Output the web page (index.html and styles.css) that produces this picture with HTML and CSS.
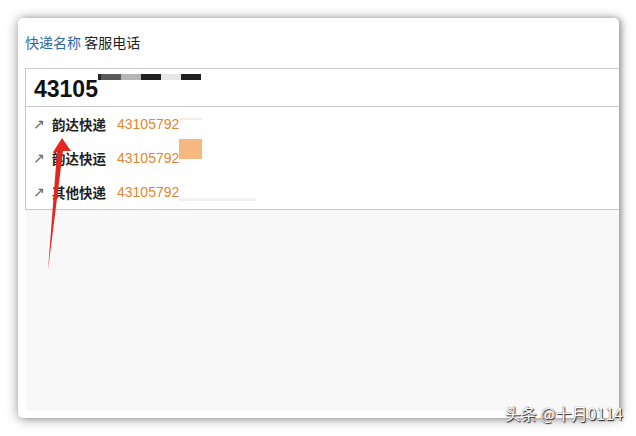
FILE: index.html
```html
<!DOCTYPE html>
<html lang="zh">
<head>
<meta charset="utf-8">
<link rel="stylesheet" href="styles.css">
</head>
<body>
<div class="page">
  <div class="card">
    <div class="tabs"><span class="tab active">快递名称</span> <span class="tab">客服电话</span></div>
    <div class="panel">
      <div class="search">
        <span class="query">43105</span>
        <span class="mask">
          <i class="m m0"></i><i class="m m1"></i><i class="m m2"></i><i class="m m3"></i><i class="m m4"></i><i class="m m5"></i>
        </span>
      </div>
      <ul class="list">
        <li class="row"><span class="ic">↗</span><span class="name">韵达快递</span><span class="num">43105792</span><span class="blur b1"></span></li>
        <li class="row"><span class="ic">↗</span><span class="name">韵达快运</span><span class="num">43105792</span><span class="blur b2"></span></li>
        <li class="row"><span class="ic">↗</span><span class="name">其他快递</span><span class="num">43105792</span><span class="blur b3"></span></li>
      </ul>
      <div class="rest"></div>
    </div>
  </div>
  <svg class="arrow" width="636" height="436" viewBox="0 0 636 436">
    <polygon points="48,270 57,152 52.5,153 62,138 71,151 63,151" fill="#e3261f"/>
  </svg>
  <div class="mark">头条 @十月0114</div>
</div>
</body>
</html>
```
FILE: styles.css
```css
html, body {
  margin: 0;
  padding: 0;
  background: #ffffff;
}
.page {
  position: relative;
  width: 636px;
  height: 436px;
  overflow: hidden;
  font-family: "Liberation Sans", "Noto Sans CJK SC", sans-serif;
}
.card {
  position: absolute;
  left: 18px;
  top: 18px;
  width: 601px;
  height: 400px;
  background: #fff;
  border-radius: 5px;
  box-shadow: 0 1px 12px rgba(0,0,0,0.42), 3px 0 5px rgba(0,0,0,0.18);
  overflow: hidden;
  display: flex;
  flex-direction: column;
  padding: 0 0 7px 7px;
  box-sizing: border-box;
}
.tabs {
  height: 50px;
  padding-top: 14px;
  box-sizing: border-box;
  font-size: 14px;
  line-height: 20px;
  font-family: "Noto Sans CJK SC", sans-serif;
  color: #222;
}
.tab.active { color: #2d68a6; }
.panel {
  flex: 1;
  display: flex;
  flex-direction: column;
  width: 720px;
}
.search {
  height: 39px;
  border: 1px solid #c9c9c9;
  box-sizing: border-box;
  display: flex;
  align-items: center;
  padding-left: 8px;
  background: #fff;
}
.query {
  font-size: 23px;
  font-weight: bold;
  color: #111;
  line-height: 24px;
  margin-top: 3px;
}
.mask {
  display: flex;
  align-self: flex-start;
  margin-top: 5px;
}
.m { display: block; height: 6px; width: 20px; }
.m0 { width: 3px; background: #222; }
.m1 { background: #5a5a5a; }
.m2 { background: #b5b5b5; }
.m3 { background: #222; }
.m4 { background: #e6e6e6; }
.m5 { background: #222; }
.list {
  list-style: none;
  margin: 0;
  padding: 0;
  border: 1px solid #c9c9c9;
  border-top: none;
  background: #fff;
}
.row {
  height: 34px;
  display: flex;
  align-items: center;
  padding-left: 7px;
  position: relative;
}
.ic {
  width: 19px;
  font-size: 14px;
  color: #666;
  font-family: "Liberation Sans", "DejaVu Sans", sans-serif;
}
.name {
  width: 65px;
  font-family: "Noto Sans CJK SC", sans-serif;
  font-size: 13.5px;
  font-weight: 600;
  color: #1f1f1f;
}
.num {
  font-size: 14px;
  color: #e3882e;
}
.blur { display: block; position: relative; }
.b1 { width: 23px; height: 2px; background: #fbeee0; align-self: flex-start; margin-top: 11px; }
.b2 { width: 23px; height: 20px; background: #f6b880; align-self: flex-start; margin-top: -2px; }
.b3 { width: 77px; height: 3px; background: #f1f1f1; align-self: flex-end; margin-bottom: 8px; }
.rest {
  flex: 1;
  background: #f8f8f8;
  margin-left: 1px;
}
.arrow {
  position: absolute;
  left: 0;
  top: 0;
}
.mark {
  position: absolute;
  right: 13px;
  top: 403px;
  font-family: "Noto Sans CJK SC", sans-serif;
  font-size: 16px;
  line-height: 20px;
  color: #fff;
  text-shadow: 1px 1px 1px #222, 0 0 1px #444;
}
```
